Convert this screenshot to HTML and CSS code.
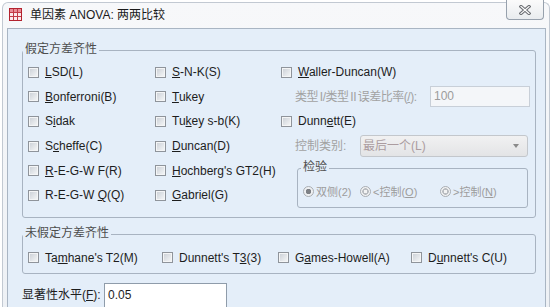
FILE: index.html
```html
<!DOCTYPE html>
<html lang="zh">
<head>
<meta charset="utf-8">
<title>单因素 ANOVA: 两两比较</title>
<link rel="stylesheet" href="styles.css">
</head>
<body>
<div class="frame">
  <div class="titlebar">
    <svg class="appicon" viewBox="0 0 13 13" width="13" height="13">
      <rect x="0.5" y="0.5" width="12" height="12" fill="#fbe9ec" stroke="#b3232f"/>
      <rect x="1" y="1" width="11" height="3.5" fill="#e98b95"/>
      <path d="M1 4.5H12M1 8.5H12M4.5 1V12M8.5 1V12" stroke="#c23a46" stroke-width="1"/>
    </svg>
    <span class="title">单因素 ANOVA: 两两比较</span>
    <div class="close">
      <svg viewBox="0 0 12 10" width="12" height="10">
        <path d="M2 1.5L10 8.5M10 1.5L2 8.5" stroke="#6a6d72" stroke-width="3.2" stroke-linecap="square"/>
        <path d="M2 1.5L10 8.5M10 1.5L2 8.5" stroke="#ffffff" stroke-width="1.2" stroke-linecap="square"/>
      </svg>
    </div>
  </div>
  <div class="client">
    <div class="group g1">
      <span class="caption">假定方差齐性</span>
      <div class="grid">
        <label class="cb"><span class="box"></span><span><u>L</u>SD(L)</span></label>
        <label class="cb"><span class="box"></span><span><u>S</u>-N-K(S)</span></label>
        <label class="cb"><span class="box"></span><span><u>W</u>aller-Duncan(W)</span></label>

        <label class="cb"><span class="box"></span><span><u>B</u>onferroni(B)</span></label>
        <label class="cb"><span class="box"></span><span><u>T</u>ukey</span></label>
        <div class="indent">
          <span class="ratio-label">类型 I/类型 II 误差比率(<u>/</u>):</span>
          <span class="ratio">100</span>
        </div>

        <label class="cb"><span class="box"></span><span>S<u>i</u>dak</span></label>
        <label class="cb"><span class="box"></span><span>Tu<u>k</u>ey s-b(K)</span></label>
        <label class="cb"><span class="box"></span><span>Dunn<u>e</u>tt(E)</span></label>

        <label class="cb"><span class="box"></span><span>S<u>c</u>heffe(C)</span></label>
        <label class="cb"><span class="box"></span><span><u>D</u>uncan(D)</span></label>
        <div class="indent">
          <span class="ctl-label">控制类别:</span>
          <span class="select"><span>最后一个(L)</span><span class="arrow"></span></span>
        </div>

        <label class="cb"><span class="box"></span><span><u>R</u>-E-G-W F(R)</span></label>
        <label class="cb"><span class="box"></span><span><u>H</u>ochberg's GT2(H)</span></label>
        <div class="group test">
          <span class="caption">检验</span>
          <div class="radios">
            <span class="ri r1"><span class="radio on"></span><span>双侧(2)</span></span>
            <span class="ri r2"><span class="radio"></span><span>&lt;控制(<u>O</u>)</span></span>
            <span class="ri"><span class="radio"></span><span>&gt;控制(<u>N</u>)</span></span>
          </div>
        </div>

        <label class="cb"><span class="box"></span><span>R-E-G-W <u>Q</u>(Q)</span></label>
        <label class="cb"><span class="box"></span><span><u>G</u>abriel(G)</span></label>
      </div>
    </div>

    <div class="group g2">
      <span class="caption">未假定方差齐性</span>
      <div class="row">
        <label class="cb w1"><span class="box"></span><span>Ta<u>m</u>hane's T2(M)</span></label>
        <label class="cb w2"><span class="box"></span><span>Dunnett's T<u>3</u>(3)</span></label>
        <label class="cb w3"><span class="box"></span><span>G<u>a</u>mes-Howell(A)</span></label>
        <label class="cb"><span class="box"></span><span>D<u>u</u>nnett's C(U)</span></label>
      </div>
    </div>

    <div class="sig">
      <span class="sig-label">显著性水平(<u>F</u>):</span>
      <span class="sig-input">0.05</span>
    </div>
  </div>
</div>
</body>
</html>
```

FILE: styles.css
```css
html, body {
  margin: 0;
  padding: 0;
}
body {
  width: 550px;
  height: 307px;
  overflow: hidden;
  background: #ffffff;
  font-family: "Liberation Sans", "Noto Sans CJK SC", sans-serif;
  font-size: 12px;
  line-height: 14px;
  color: #1d1d1d;
}
u {
  text-decoration: underline;
  text-underline-offset: 1px;
}

.frame {
  margin: 2px 0 0 2px;
  width: 548px;
  height: 305px;
  box-sizing: border-box;
  border: 1px solid #c2c9d2;
  border-bottom: none;
  border-radius: 6px 6px 0 0;
  background: linear-gradient(#f7f8fa, #eef1f5);
}

.titlebar {
  height: 25px;
  display: flex;
  align-items: flex-start;
}
.appicon {
  flex: none;
  margin: 5px 0 0 6px;
}
.title {
  margin: 5px 0 0 8px;
  font-size: 12px;
  line-height: 14px;
  color: #1a1a1a;
}
.close {
  margin: -3px 5px 0 auto;
  width: 38px;
  height: 20px;
  box-sizing: border-box;
  border: 1px solid #97a1ad;
  border-top: none;
  border-radius: 0 0 4px 4px;
  background: linear-gradient(#fbfbfb, #e9ecef);
  display: flex;
  align-items: center;
  justify-content: center;
}

.client {
  margin-left: 4px;
  width: 539px;
  height: 279px;
  box-sizing: border-box;
  border: 1px solid #a9b5c3;
  border-bottom: none;
  background: #e4eef9;
  padding-top: 1px;
}

.group {
  position: relative;
  border: 1px solid #a8b3c1;
  border-radius: 3px;
}
.caption {
  position: absolute;
  left: 0;
  top: -9px;
  padding: 0 2px;
  background: #e4eef9;
  line-height: 14px;
  color: #4d4d4d;
}

.g1 {
  margin: 20px 9px 0 14px;
}
.grid {
  display: grid;
  grid-template-columns: 127px 126px 1fr;
  grid-auto-rows: 24.6px;
  padding: 9px 0 9px 5px;
}

.cb {
  display: flex;
  align-items: center;
  gap: 6px;
  white-space: nowrap;
}
.box {
  flex: none;
  width: 11px;
  height: 11px;
  box-sizing: border-box;
  border: 1px solid #8f949b;
  background: linear-gradient(135deg, #c9ced5 0%, #eef0f2 80%, #f7f7f7 100%);
  box-shadow: inset 0 0 0 1px #f4f5f6;
}

.indent {
  display: flex;
  align-items: center;
  padding-left: 14px;
  color: #a2a2a2;
  white-space: nowrap;
}
.ratio-label {
  letter-spacing: -0.5px;
  word-spacing: -1px;
}
.ratio {
  margin: 0 5px 0 auto;
  width: 100px;
  height: 21px;
  flex: none;
  box-sizing: border-box;
  border: 1px solid #c8cfd8;
  background: #f4f6f9;
  color: #9c9c9c;
  padding-left: 3px;
  line-height: 19px;
}
.ctl-label {
  width: 65px;
  flex: none;
}
.select {
  width: 168px;
  height: 22px;
  box-sizing: border-box;
  border: 1px solid #c3c7cc;
  border-radius: 3px;
  background: linear-gradient(#f1f1f2, #e3e4e6);
  color: #ab9ca0;
  display: flex;
  align-items: center;
  padding-left: 2px;
}
.arrow {
  margin: 0 8px 0 auto;
  width: 0;
  height: 0;
  border-left: 3.5px solid transparent;
  border-right: 3.5px solid transparent;
  border-top: 4px solid #8a8a8a;
}

.test {
  grid-row: span 2;
  align-self: end;
  height: 40px;
  box-sizing: border-box;
  margin: 0 7px 0 16px;
}
.test .caption {
  left: 3px;
  color: #505050;
}
.radios {
  display: flex;
  padding: 16px 0 0 5px;
  height: 14px;
  font-size: 11px;
  color: #9d9d9d;
  white-space: nowrap;
}
.ri {
  display: flex;
  align-items: center;
  gap: 2px;
}
.r1 { width: 57px; }
.r2 { width: 80px; }
.radio {
  flex: none;
  width: 11px;
  height: 11px;
  box-sizing: border-box;
  border-radius: 50%;
  border: 1px solid #a9adb2;
  background: radial-gradient(circle, #f3f3f3 0 1.5px, #b9bcc0 2px 3px, #f1f2f3 3.5px);
}
.radio.on {
  background: radial-gradient(circle, #7e8186 0 2.5px, #eef0f2 3px);
}

.g2 {
  margin: 16px 9px 0 14px;
}
.row {
  display: flex;
  height: 24px;
  padding: 11px 0 3px 5px;
}
.w1 { width: 134px; }
.w2 { width: 116px; }
.w3 { width: 133px; }

.sig {
  display: flex;
  align-items: center;
  margin: 9px 0 0 14px;
  height: 24px;
}
.sig-label {
  width: 82px;
  flex: none;
  color: #1d1d1d;
}
.sig-input {
  width: 123px;
  height: 24px;
  box-sizing: border-box;
  border: 1px solid #8f9caa;
  border-bottom: none;
  background: #ffffff;
  padding-left: 3px;
  line-height: 22px;
}
```
